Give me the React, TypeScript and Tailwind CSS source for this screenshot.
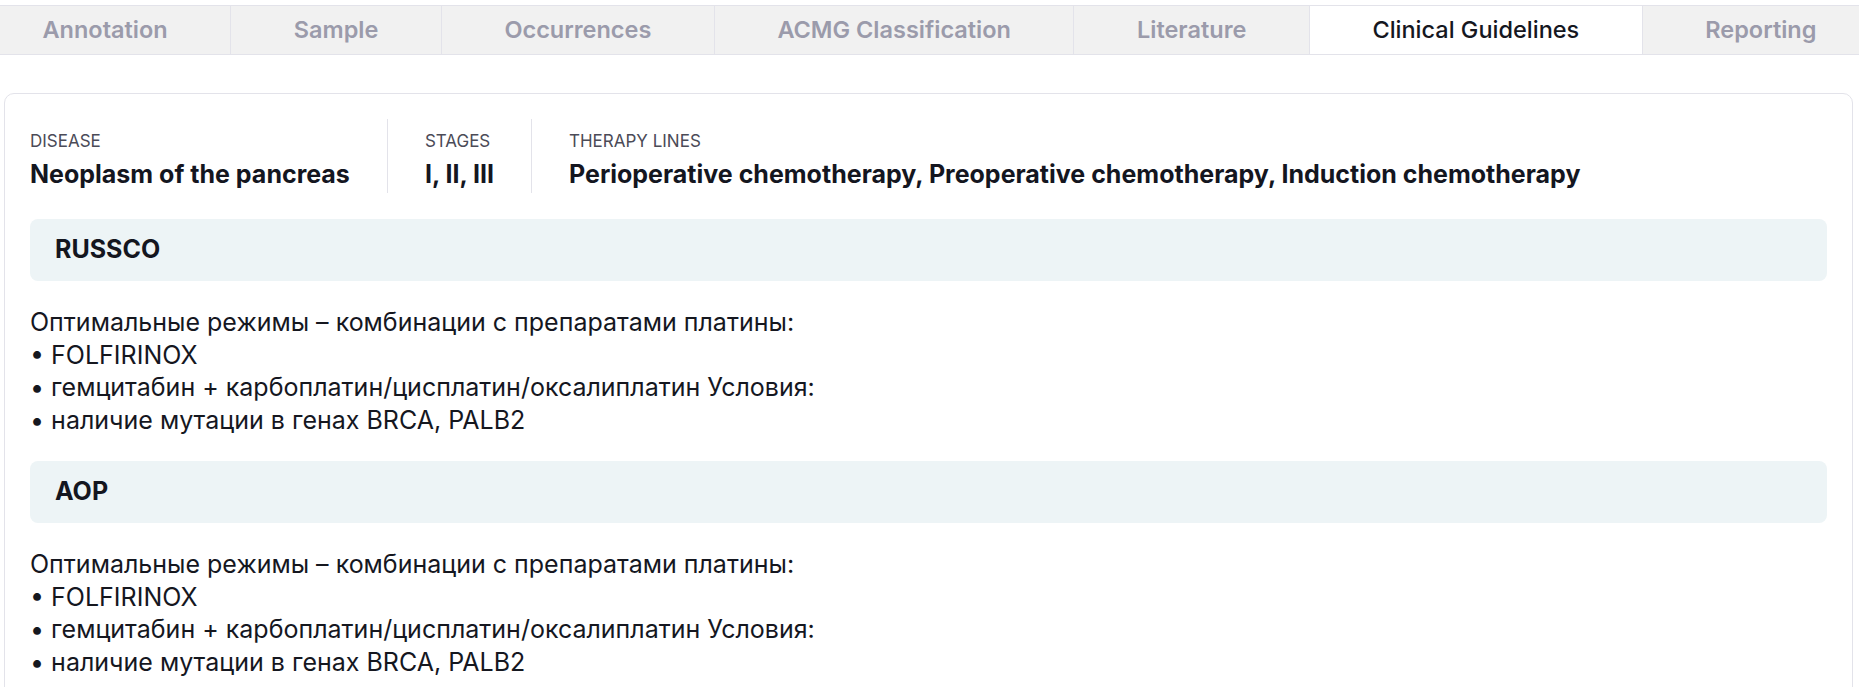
const tabs = [
  "Annotation",
  "Sample",
  "Occurrences",
  "ACMG Classification",
  "Literature",
  "Clinical Guidelines",
  "Reporting",
];

const guidelineText = [
  "Оптимальные режимы – комбинации с препаратами платины:",
  "• FOLFIRINOX",
  "• гемцитабин + карбоплатин/цисплатин/оксалиплатин Условия:",
  "• наличие мутации в генах BRCA, PALB2",
];

const guidelines = [
  { source: "RUSSCO", lines: guidelineText },
  { source: "AOP", lines: guidelineText },
];

function Tabs({ active }: { active: string }) {
  return (
    <div className="-mx-5 flex border-y border-[#e3e3ea] bg-[#f1f1f1]">
      {tabs.map((tab) => (
        <div
          key={tab}
          className={
            tab === active
              ? "flex h-[48px] flex-auto items-center justify-center border-l border-[#e3e3ea] bg-white px-4 text-[23.5px] font-medium text-[#15171f]"
              : "flex h-[48px] flex-auto items-center justify-center border-l border-[#e3e3ea] px-4 text-[23.5px] font-semibold text-[#9b9bab] first:border-l-0"
          }
        >
          {tab}
        </div>
      ))}
    </div>
  );
}

function InfoItem({ label, value, first }: { label: string; value: string; first?: boolean }) {
  return (
    <div
      className={
        first
          ? "flex flex-col pr-[37px] pt-[10px]"
          : "flex flex-col border-l border-[#e3e3ea] px-[37px] pt-[10px]"
      }
    >
      <span className="text-[17px] leading-[24px] text-[#4b4b57] uppercase">{label}</span>
      <span className="mt-[5px] text-[25px] leading-[32px] font-bold text-[#14161f]">{value}</span>
    </div>
  );
}

export default function App() {
  return (
    <div className="min-h-screen overflow-hidden bg-white pt-[5px] font-[Inter,'Noto_Sans',sans-serif]">
      <Tabs active="Clinical Guidelines" />

      {/* --- Guideline card --- */}
      <div className="mt-[38px] ml-1 mr-[6px] rounded-[10px] border border-[#e3e3ea] p-[25px]">
        <div className="flex h-[74px]">
          <InfoItem first label="Disease" value="Neoplasm of the pancreas" />
          <InfoItem label="Stages" value="I, II, III" />
          <InfoItem
            label="Therapy lines"
            value="Perioperative chemotherapy, Preoperative chemotherapy, Induction chemotherapy"
          />
        </div>

        <div className="mt-[26px] flex flex-col gap-[25px]">
          {guidelines.map((g) => (
            <div key={g.source} className="flex flex-col gap-[25px]">
              <div className="rounded-lg bg-[#edf4f6] px-[25px] pt-[14px] pb-[16px] text-[25px] leading-[32px] font-bold text-[#14161f]">
                {g.source}
              </div>
              <div className="text-[25px] leading-[32.5px] text-[#15171f]">
                {g.lines.map((line, i) => (
                  <div key={i}>{line}</div>
                ))}
              </div>
            </div>
          ))}
        </div>
      </div>
    </div>
  );
}
